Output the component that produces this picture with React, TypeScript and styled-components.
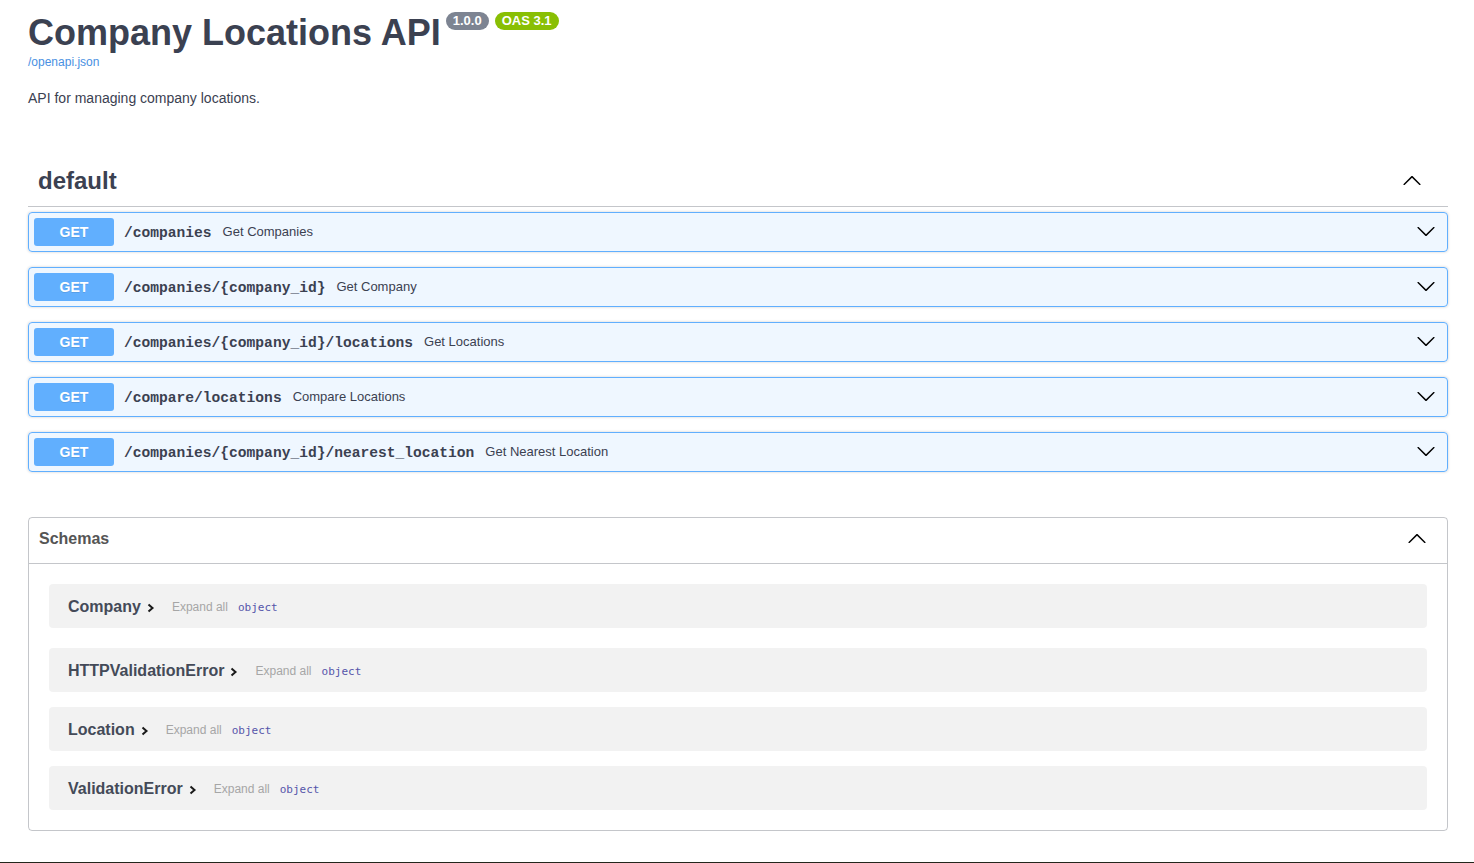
import React from "react";
import styled, { createGlobalStyle } from "styled-components";

const GlobalStyle = createGlobalStyle`
  html, body {
    margin: 0;
    padding: 0;
    background: #fff;
  }
  body {
    font-family: "Liberation Sans", Arial, sans-serif;
    color: #3b4151;
  }
  * {
    box-sizing: border-box;
  }
`;

type Endpoint = { path: string; summary: string };

const endpoints: Endpoint[] = [
  { path: "/companies", summary: "Get Companies" },
  { path: "/companies/{company_id}", summary: "Get Company" },
  { path: "/companies/{company_id}/locations", summary: "Get Locations" },
  { path: "/compare/locations", summary: "Compare Locations" },
  { path: "/companies/{company_id}/nearest_location", summary: "Get Nearest Location" },
];

const schemas = ["Company", "HTTPValidationError", "Location", "ValidationError"];

function Arrow({ up }: { up?: boolean }) {
  return (
    <ArrowSvg viewBox="0 0 20 20" $up={up}>
      <path d="M17.418 6.109c.272-.268.709-.268.979 0s.271.701 0 .969l-7.908 7.83c-.27.268-.707.268-.979 0l-7.908-7.83c-.27-.268-.27-.701 0-.969.271-.268.709-.268.979 0L10 13.25l7.418-7.141z" />
    </ArrowSvg>
  );
}

function SmallChevron() {
  return (
    <ChevronSvg viewBox="0 0 8 10">
      <path d="M1.5 1.5 L5.5 5 L1.5 8.5" />
    </ChevronSvg>
  );
}

export default function App() {
  return (
    <Page>
      <GlobalStyle />
      <Wrapper>
        <Info>
          <TitleRow>
            <Title>Company Locations API</Title>
            <Badge $color="#7d8492">1.0.0</Badge>
            <Badge $color="#89bf04">OAS 3.1</Badge>
          </TitleRow>
          <SpecLink href="#">/openapi.json</SpecLink>
          <Description>API for managing company locations.</Description>
        </Info>

        <TagHeader>
          <TagName>default</TagName>
          <Arrow up />
        </TagHeader>

        <OpList>
          {endpoints.map((e) => (
            <OpBlock key={e.path}>
              <Method>GET</Method>
              <OpPath>{e.path}</OpPath>
              <OpSummary>{e.summary}</OpSummary>
              <OpArrow>
                <Arrow />
              </OpArrow>
            </OpBlock>
          ))}
        </OpList>

        <Models>
          <ModelsHeader>
            <span>Schemas</span>
            <Arrow up />
          </ModelsHeader>
          <ModelList>
            {schemas.map((s) => (
              <ModelRow key={s}>
                <ModelTitle>{s}</ModelTitle>
                <SmallChevron />
                <ExpandAll>Expand all</ExpandAll>
                <PropType>object</PropType>
              </ModelRow>
            ))}
          </ModelList>
        </Models>
      </Wrapper>
      <BottomRule />
    </Page>
  );
}

const Page = styled.div`
  min-height: 100vh;
  display: flex;
  flex-direction: column;
`;

const Wrapper = styled.div`
  width: 100%;
  max-width: 1460px;
  margin: 0 auto;
  padding: 0 19px 0 21px;
`;

const Info = styled.div`
  padding-top: 12px;
  margin-bottom: 51px;
`;

const TitleRow = styled.div`
  display: flex;
  align-items: flex-start;
`;

const Title = styled.h2`
  margin: 0 5px 0 0;
  font-size: 36px;
  font-weight: bold;
  color: #3b4151;
  line-height: 41px;
`;

const Badge = styled.span<{ $color: string }>`
  display: inline-block;
  margin: 0 6px 0 0;
  padding: 2px 7px 2px 7px;
  border-radius: 57px;
  background: ${(p) => p.$color};
  color: #fff;
  font-size: 13px;
  font-weight: bold;
  line-height: 14px;
`;

const SpecLink = styled.a`
  display: block;
  margin-top: 2px;
  font-size: 12px;
  line-height: 14px;
  color: #4990e2;
  text-decoration: none;
`;

const Description = styled.p`
  margin: 21px 0 0;
  font-size: 14px;
  line-height: 16px;
  color: #3b4151;
`;

const TagHeader = styled.div`
  display: flex;
  align-items: center;
  justify-content: space-between;
  padding: 10px 26px 11px 10px;
  border-bottom: 1px solid rgba(59, 65, 81, 0.3);
  margin-bottom: 5px;
`;

const TagName = styled.h3`
  margin: 0;
  font-size: 24px;
  line-height: 28px;
  font-weight: bold;
  color: #3b4151;
`;

const ArrowSvg = styled.svg<{ $up?: boolean }>`
  width: 20px;
  height: 20px;
  fill: #000;
  flex-shrink: 0;
  transform: ${(p) => (p.$up ? "rotate(180deg)" : "none")};
`;

const OpList = styled.div`
  display: flex;
  flex-direction: column;
  gap: 15px;
`;

const OpBlock = styled.div`
  display: flex;
  align-items: center;
  height: 40px;
  padding: 5px;
  border: 1px solid #61affe;
  border-radius: 4px;
  background: rgba(97, 175, 254, 0.1);
  box-shadow: 0 0 3px rgba(0, 0, 0, 0.19);
`;

const Method = styled.span`
  min-width: 80px;
  padding: 6px 0;
  border-radius: 3px;
  background: #61affe;
  color: #fff;
  font-size: 14px;
  line-height: 16px;
  font-weight: bold;
  text-align: center;
  text-shadow: 0 1px 0 rgba(0, 0, 0, 0.1);
`;

const OpPath = styled.span`
  padding: 2px 11px 0 10px;
  font-family: "Liberation Mono", "DejaVu Sans Mono", monospace;
  font-size: 14.6px;
  font-weight: bold;
  color: #3b4151;
`;

const OpSummary = styled.span`
  flex: 1;
  padding-bottom: 1px;
  font-size: 13px;
  color: #3b4151;
`;

const OpArrow = styled.span`
  display: flex;
  padding: 0 6px 2px 10px;
`;

const Models = styled.section`
  margin-top: 45px;
  border: 1px solid rgba(59, 65, 81, 0.3);
  border-radius: 4px;
`;

const ModelsHeader = styled.h4`
  display: flex;
  align-items: center;
  justify-content: space-between;
  margin: 0;
  padding: 8px 20px 12px 10px;
  min-height: 46px;
  border-bottom: 1px solid rgba(59, 65, 81, 0.3);
  font-size: 16px;
  font-weight: bold;
  color: #555;
`;

const ModelList = styled.div`
  display: flex;
  flex-direction: column;
  gap: 15px;
  padding: 20px 20px 20px;

  & > div:first-child {
    margin-bottom: 5px;
  }
`;

const ModelRow = styled.div`
  display: flex;
  align-items: center;
  height: 44px;
  padding: 2px 19px 0;
  border-radius: 4px;
  background: rgba(0, 0, 0, 0.05);
`;

const ModelTitle = styled.span`
  font-size: 16px;
  font-weight: bold;
  color: #444a58;
`;

const ChevronSvg = styled.svg`
  width: 8px;
  height: 10px;
  margin: 2px 0 0 6px;
  fill: none;
  stroke: #1a1a1a;
  stroke-width: 2;
`;

const ExpandAll = styled.span`
  margin-left: 17px;
  font-size: 12px;
  color: #a6a6a6;
`;

const PropType = styled.span`
  margin-left: 10px;
  font-family: "DejaVu Sans Mono", "Liberation Mono", monospace;
  font-size: 11px;
  font-weight: normal;
  color: #55a;
`;

const BottomRule = styled.div`
  margin-top: auto;
  height: 1px;
  background: #23261c;
`;
